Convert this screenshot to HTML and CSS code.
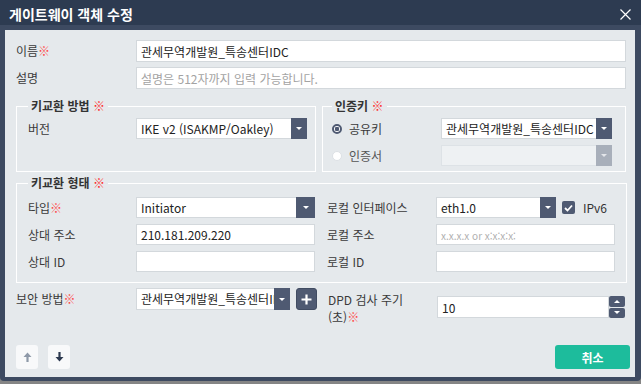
FILE: index.html
```html
<!DOCTYPE html>
<html lang="ko">
<head>
    <meta charset="UTF-8">
    <meta name="viewport" content="width=device-width, initial-scale=1.0">
    <title>게이트웨이 객체 수정</title>
    <link rel="stylesheet" href="styles.css">
</head>
<body>
    <div class="dialog">
        <div class="dialog-header">
            <span class="dialog-title">게이트웨이 객체 수정</span>
            <button class="close-btn" title="닫기">
                <svg width="11" height="11" viewBox="0 0 11 11"><path d="M0.5 0.5L10.5 10.5M10.5 0.5L0.5 10.5" stroke="#fff" stroke-width="1.2"/></svg>
            </button>
        </div>
        <div class="dialog-body">
            <div class="row">
                <label class="label">이름<span class="req">※</span></label>
                <input class="input" type="text" value="관세무역개발원_특송센터IDC">
            </div>
            <div class="row row-gap">
                <label class="label">설명</label>
                <input class="input" type="text" placeholder="설명은 512자까지 입력 가능합니다.">
            </div>

            <div class="fs-row">
                <fieldset class="fs fs-method">
                    <legend>키교환 방법 <span class="req-bold">※</span></legend>
                    <div class="frow">
                        <label class="flabel">버전</label>
                        <div class="select w171">
                            <span class="select-text">IKE v2 (ISAKMP/Oakley)</span>
                            <span class="select-btn"><i class="caret"></i></span>
                        </div>
                    </div>
                </fieldset>
                <fieldset class="fs fs-key">
                    <legend>인증키 <span class="req-bold">※</span></legend>
                    <div class="frow">
                        <label class="radio-label"><span class="radio checked"></span>공유키</label>
                        <div class="select w171">
                            <span class="select-text">관세무역개발원_특송센터IDC</span>
                            <span class="select-btn"><i class="caret"></i></span>
                        </div>
                    </div>
                    <div class="frow frow-gap">
                        <label class="radio-label muted"><span class="radio"></span>인증서</label>
                        <div class="select w171 disabled">
                            <span class="select-text"></span>
                            <span class="select-btn"><i class="caret"></i></span>
                        </div>
                    </div>
                </fieldset>
            </div>

            <fieldset class="fs fs-type">
                <legend>키교환 형태 <span class="req-bold">※</span></legend>
                <div class="cols">
                    <div class="col">
                        <div class="frow">
                            <label class="flabel">타입<span class="req">※</span></label>
                            <div class="select w179">
                                <span class="select-text">Initiator</span>
                                <span class="select-btn wide"><i class="caret"></i></span>
                            </div>
                        </div>
                        <div class="frow frow-gap">
                            <label class="flabel">상대 주소</label>
                            <input class="input w179" type="text" value="210.181.209.220">
                        </div>
                        <div class="frow frow-gap">
                            <label class="flabel">상대 ID</label>
                            <input class="input w179" type="text">
                        </div>
                    </div>
                    <div class="col col-right">
                        <div class="frow">
                            <label class="flabel">로컬 인터페이스</label>
                            <div class="select w120">
                                <span class="select-text">eth1.0</span>
                                <span class="select-btn"><i class="caret"></i></span>
                            </div>
                            <span class="checkbox">
                                <svg width="9" height="8" viewBox="0 0 9 8"><path d="M1 4L3.5 6.5L8 1.5" stroke="#fff" stroke-width="1.8" fill="none"/></svg>
                            </span>
                            <span class="check-text">IPv6</span>
                        </div>
                        <div class="frow frow-gap">
                            <label class="flabel">로컬 주소</label>
                            <input class="input w179 small-ph" type="text" placeholder="x.x.x.x or x:x:x:x:">
                        </div>
                        <div class="frow frow-gap">
                            <label class="flabel">로컬 ID</label>
                            <input class="input w179" type="text">
                        </div>
                    </div>
                </div>
            </fieldset>

            <div class="bottom-row">
                <div class="frow">
                    <label class="label">보안 방법<span class="req">※</span></label>
                    <div class="select w154 tall">
                        <span class="select-text">관세무역개발원_특송센터IDC</span>
                        <span class="select-btn"><i class="caret"></i></span>
                    </div>
                    <button class="plus-btn">
                        <svg width="11" height="11" viewBox="0 0 11 11"><path d="M5.5 0.5V10.5M0.5 5.5H10.5" stroke="#fff" stroke-width="2.2"/></svg>
                    </button>
                </div>
                <div class="dpd">
                    <label class="dpd-label">DPD 검사 주기<br>(초)<span class="req">※</span></label>
                    <div class="spin">
                        <input class="input spin-input" type="text" value="10">
                        <div class="spin-btns">
                            <span class="spin-btn"><i class="caret up"></i></span>
                            <span class="spin-btn"><i class="caret"></i></span>
                        </div>
                    </div>
                </div>
            </div>

            <div class="footer">
                <div class="move-btns">
                    <button class="move-btn">
                        <svg width="9" height="10" viewBox="0 0 9 10"><path d="M4.5 0.5L8.5 5H5.6V10H3.4V5H0.5Z" fill="#8e99a8"/></svg>
                    </button>
                    <button class="move-btn">
                        <svg width="9" height="10" viewBox="0 0 9 10"><path d="M4.5 9.5L8.5 5H5.6V0H3.4V5H0.5Z" fill="#2d3a50"/></svg>
                    </button>
                </div>
                <button class="cancel-btn">취소</button>
            </div>
        </div>
    </div>
</body>
</html>
```

FILE: styles.css
```css
* {
    box-sizing: border-box;
}
html, body {
    margin: 0;
}
body {
    background-color: #858585;
    font-family: "Noto Sans CJK KR", "Noto Sans", sans-serif;
    font-size: 12px;
    color: #3a3a3a;
}
.dialog {
    width: 641px;
    height: 381px;
    background-color: #3d4a61;
    border-radius: 0 0 4px 4px;
    display: flex;
    flex-direction: column;
}
.dialog-header {
    height: 25px;
    flex-shrink: 0;
    background-color: #2d3b51;
    display: flex;
    align-items: center;
    justify-content: space-between;
    padding: 0 10px 0 9px;
}
.dialog-title {
    color: #fff;
    font-weight: bold;
    font-size: 14px;
    line-height: 16px;
    margin-top: 3px;
}
.close-btn {
    background: none;
    border: 0;
    padding: 0;
    width: 11px;
    height: 11px;
    margin-top: 3px;
    display: flex;
}
.dialog-body {
    flex: 1;
    margin: 5px 6px 4px 5px;
    background-color: #e5e9ec;
    display: flex;
    flex-direction: column;
    padding: 10px 9px 8px 11px;
}
.row {
    display: flex;
    align-items: center;
    height: 22px;
}
.row-gap {
    margin-top: 5px;
}
.label {
    width: 120px;
    flex-shrink: 0;
    line-height: 16px;
}
.req {
    color: #ff4a4a;
}
.req-bold {
    color: #ff2a2a;
    font-weight: bold;
}
.input {
    flex: 1;
    height: 22px;
    border: 1px solid #d3d8dc;
    background-color: #fff;
    padding: 0 4px;
    font-family: inherit;
    font-size: 12px;
    color: #222;
    outline: none;
}
.input::placeholder {
    color: #a3a3a3;
}
.small-ph::placeholder {
    font-size: 10px;
    color: #b0b0b0;
}
.fs-row {
    display: flex;
    gap: 6px;
    margin-top: 9px;
}
.fs {
    margin: 0;
    min-width: 0;
    border: 1px solid #fff;
    padding: 4px 9px 5px 11px;
}
.fs legend {
    padding: 0 3px;
    font-weight: bold;
    font-size: 12px;
    line-height: 16px;
    color: #333;
}
.fs-method {
    width: 300px;
}
.fs-key {
    flex: 1;
    padding-left: 9px;
}
.fs-type {
    margin-top: 3px;
    margin-right: -1px;
    padding-top: 6px;
    padding-bottom: 10px;
}
.frow {
    display: flex;
    align-items: center;
    height: 21px;
}
.frow-gap {
    margin-top: 6px;
}
.flabel {
    width: 108px;
    flex-shrink: 0;
    line-height: 16px;
}
.radio-label {
    width: 109px;
    flex-shrink: 0;
    display: flex;
    align-items: center;
    gap: 7px;
    line-height: 16px;
}
.radio-label.muted {
    color: #555;
}
.radio {
    width: 10px;
    height: 10px;
    border-radius: 50%;
    background-color: #fff;
    border: 1px solid #dde1e5;
}
.radio.checked {
    border: 2px solid #4f5a72;
    background: radial-gradient(circle, #4f5a72 0 2px, #fff 2.5px);
}
.select {
    display: flex;
    height: 21px;
    border: 1px solid #d3d8dc;
    background-color: #fff;
    flex-shrink: 0;
}
.select.tall {
    height: 22px;
}
.select-text {
    flex: 1;
    overflow: hidden;
    white-space: nowrap;
    padding: 0 3px 0 4px;
    line-height: 19px;
    color: #222;
}
.select-btn {
    width: 16px;
    margin: -1px -1px -1px 0;
    background-color: #4f5a72;
    display: flex;
    align-items: center;
    justify-content: center;
}
.select-btn.wide {
    width: 19px;
}
.caret {
    width: 0;
    height: 0;
    border-left: 3.5px solid transparent;
    border-right: 3.5px solid transparent;
    border-top: 3.5px solid #fff;
}
.caret.up {
    border-top: 0;
    border-bottom: 3.5px solid #fff;
}
.select.disabled {
    background-color: #eef1f3;
    border-color: #dde2e6;
}
.select.disabled .select-btn {
    background-color: #a8afba;
}
.select.disabled .caret {
    border-top-color: #e3e6ea;
}
.w120 { width: 120px; }
.w154 { width: 154px; }
.w171 { width: 171px; }
.w179 { width: 179px; flex: none; height: 21px; }
.cols {
    display: flex;
    gap: 12px;
}
.col {
    width: 287px;
}
.col-right {
    width: 288px;
}
.col-right .flabel {
    width: 109px;
}
.checkbox {
    width: 13px;
    height: 13px;
    margin-left: 6px;
    border-radius: 2px;
    background-color: #4f5a72;
    display: flex;
    align-items: center;
    justify-content: center;
}
.check-text {
    margin-left: 8px;
    color: #333;
}
.bottom-row {
    display: flex;
    margin-top: 5px;
    gap: 11px;
}
.bottom-row .frow {
    height: 22px;
    align-items: center;
}
.plus-btn {
    width: 21px;
    height: 22px;
    margin-left: 6px;
    padding: 0;
    border: 1px solid #414c62;
    border-radius: 3px;
    background-color: #4f5a72;
    display: flex;
    align-items: center;
    justify-content: center;
}
.dpd {
    display: flex;
    align-items: flex-start;
}
.dpd-label {
    width: 109px;
    line-height: 17px;
    margin-top: 3px;
}
.spin {
    display: flex;
    margin-top: 8px;
}
.spin-input {
    width: 172px;
    flex: none;
}
.spin-btns {
    display: flex;
    flex-direction: column;
    gap: 1px;
}
.spin-btn {
    width: 16px;
    height: 10.5px;
    border-radius: 2px;
    background-color: #4f5a72;
    display: flex;
    align-items: center;
    justify-content: center;
}
.footer {
    margin-top: auto;
    margin-right: -4px;
    display: flex;
    justify-content: space-between;
    align-items: flex-end;
}
.move-btns {
    display: flex;
    gap: 10px;
}
.move-btn {
    width: 22px;
    height: 24px;
    padding: 0;
    border: 0;
    border-radius: 3px;
    background-color: #f8f9fa;
    display: flex;
    align-items: center;
    justify-content: center;
}
.cancel-btn {
    width: 75px;
    height: 24px;
    border: 0;
    border-radius: 3px;
    background-color: #1dbc9c;
    color: #fff;
    font-family: inherit;
    font-weight: bold;
    font-size: 12px;
}
```
